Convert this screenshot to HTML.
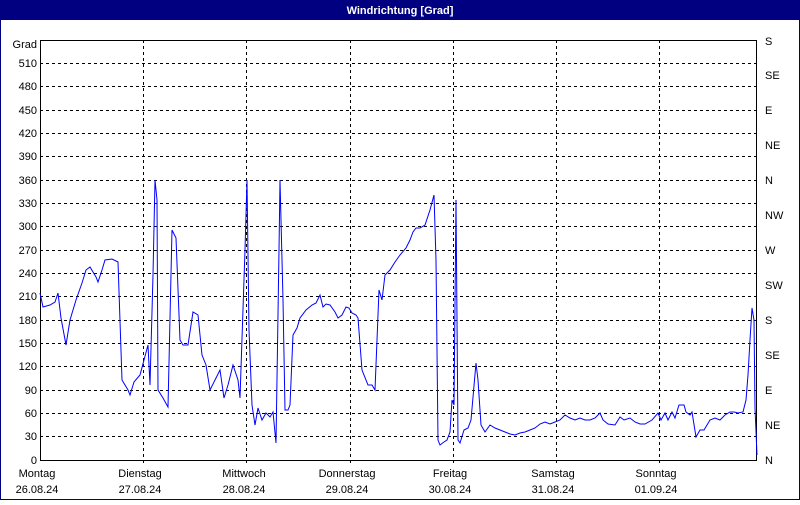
<!DOCTYPE html>
<html><head><meta charset="utf-8"><style>
html,body{margin:0;padding:0;background:#fff;}
body{width:800px;height:500px;overflow:hidden;font-family:"Liberation Sans",sans-serif;}
</style></head><body>
<svg width="800" height="500" xmlns="http://www.w3.org/2000/svg" font-family="Liberation Sans, sans-serif" font-size="11">
<rect x="0" y="0" width="800" height="500" fill="#fff"/>
<rect x="0.5" y="0.5" width="799" height="499" fill="none" stroke="#000080"/>
<rect x="0" y="0" width="800" height="20" fill="#000080"/>
<text x="400" y="14" fill="#fff" font-weight="bold" text-anchor="middle" font-size="11">Windrichtung [Grad]</text>
<g stroke="#000" stroke-dasharray="3,3" stroke-width="1">
<path d="M40 63.5H757M40 86.5H757M40 110.5H757M40 133.5H757M40 156.5H757M40 180.5H757M40 203.5H757M40 226.5H757M40 250.5H757M40 273.5H757M40 296.5H757M40 320.5H757M40 343.5H757M40 366.5H757M40 390.5H757M40 413.5H757M40 436.5H757"/>
<path d="M143.5 40V466M246.5 40V466M350.5 40V466M453.5 40V466M556.5 40V466M659.5 40V466"/>
</g>
<rect x="40.5" y="40.5" width="716" height="420" fill="none" stroke="#000"/>
<g text-anchor="end" fill="#000">
<text x="37" y="48">Grad</text>
<text x="37" y="67">510</text><text x="37" y="90">480</text><text x="37" y="114">450</text>
<text x="37" y="137">420</text><text x="37" y="160">390</text><text x="37" y="184">360</text>
<text x="37" y="207">330</text><text x="37" y="230">300</text><text x="37" y="254">270</text>
<text x="37" y="277">240</text><text x="37" y="300">210</text><text x="37" y="324">180</text>
<text x="37" y="347">150</text><text x="37" y="370">120</text><text x="37" y="394">90</text>
<text x="37" y="417">60</text><text x="37" y="440">30</text><text x="37" y="464">0</text>
</g>
<g fill="#000">
<text x="765" y="45">S</text><text x="765" y="79">SE</text><text x="765" y="114">E</text>
<text x="765" y="149">NE</text><text x="765" y="184">N</text><text x="765" y="219">NW</text>
<text x="765" y="254">W</text><text x="765" y="289">SW</text><text x="765" y="324">S</text>
<text x="765" y="359">SE</text><text x="765" y="394">E</text><text x="765" y="429">NE</text>
<text x="765" y="464">N</text>
</g>
<g fill="#000" text-anchor="middle">
<text x="37" y="477">Montag</text><text x="37" y="493">26.08.24</text>
<text x="140" y="477">Dienstag</text><text x="140" y="493">27.08.24</text>
<text x="244" y="477">Mittwoch</text><text x="244" y="493">28.08.24</text>
<text x="347" y="477">Donnerstag</text><text x="347" y="493">29.08.24</text>
<text x="450" y="477">Freitag</text><text x="450" y="493">30.08.24</text>
<text x="553" y="477">Samstag</text><text x="553" y="493">31.08.24</text>
<text x="656" y="477">Sonntag</text><text x="656" y="493">01.09.24</text>
</g>
<polyline fill="none" stroke="#0000ff" stroke-width="1" points="40,293 43,307 50,305 55,302 58,293 61,318 66,345 70,320 76,300 82,283 86,270 90,267 96,277 98,282 102,270 105,260 112,259 118,262 122,380 128,390 130,395 134,382 140,375 144,360 148,345 150,385 153,275 155,180 157,200 158,390 163,398 168,407 172,230 176,238 180,340 183,345 188,345 193,312 198,315 202,355 206,365 210,390 215,380 220,370 224,398 228,385 233,365 238,380 240,398 245,250 247,180 249,330 252,405 255,425 258,408 262,420 266,413 270,417 273,412 276,443 279,250 280,180 283,300 285,410 288,410 290,405 293,335 297,328 300,318 306,310 312,305 316,303 320,295 323,307 326,304 330,305 335,312 338,318 342,315 346,307 349,308 352,313 356,315 358,318 362,370 368,385 372,385 375,390 379,290 382,300 385,275 390,270 395,262 400,255 406,248 410,240 413,232 416,228 420,228 425,225 430,210 434,195 436,260 438,440 440,445 444,442 447,440 450,432 452,400 454,405 456,200 458,440 460,443 464,430 468,428 471,420 476,363 478,380 481,425 485,432 490,425 495,428 500,430 505,432 510,434 515,435 520,433 525,432 530,430 535,428 540,424 545,422 550,424 555,422 560,420 565,415 570,418 575,420 580,418 585,420 590,420 595,418 600,413 603,420 608,424 615,425 620,417 624,420 630,418 635,422 640,424 645,424 652,420 658,413 661,420 665,413 668,420 672,412 675,418 679,405 684,405 686,412 690,415 692,412 696,437 700,430 704,430 710,420 715,418 720,420 725,415 730,412 734,412 738,413 743,412 746,400 748,375 750,340 752,308 754,320 755,408 757,455"/>
</svg>
</body></html>
